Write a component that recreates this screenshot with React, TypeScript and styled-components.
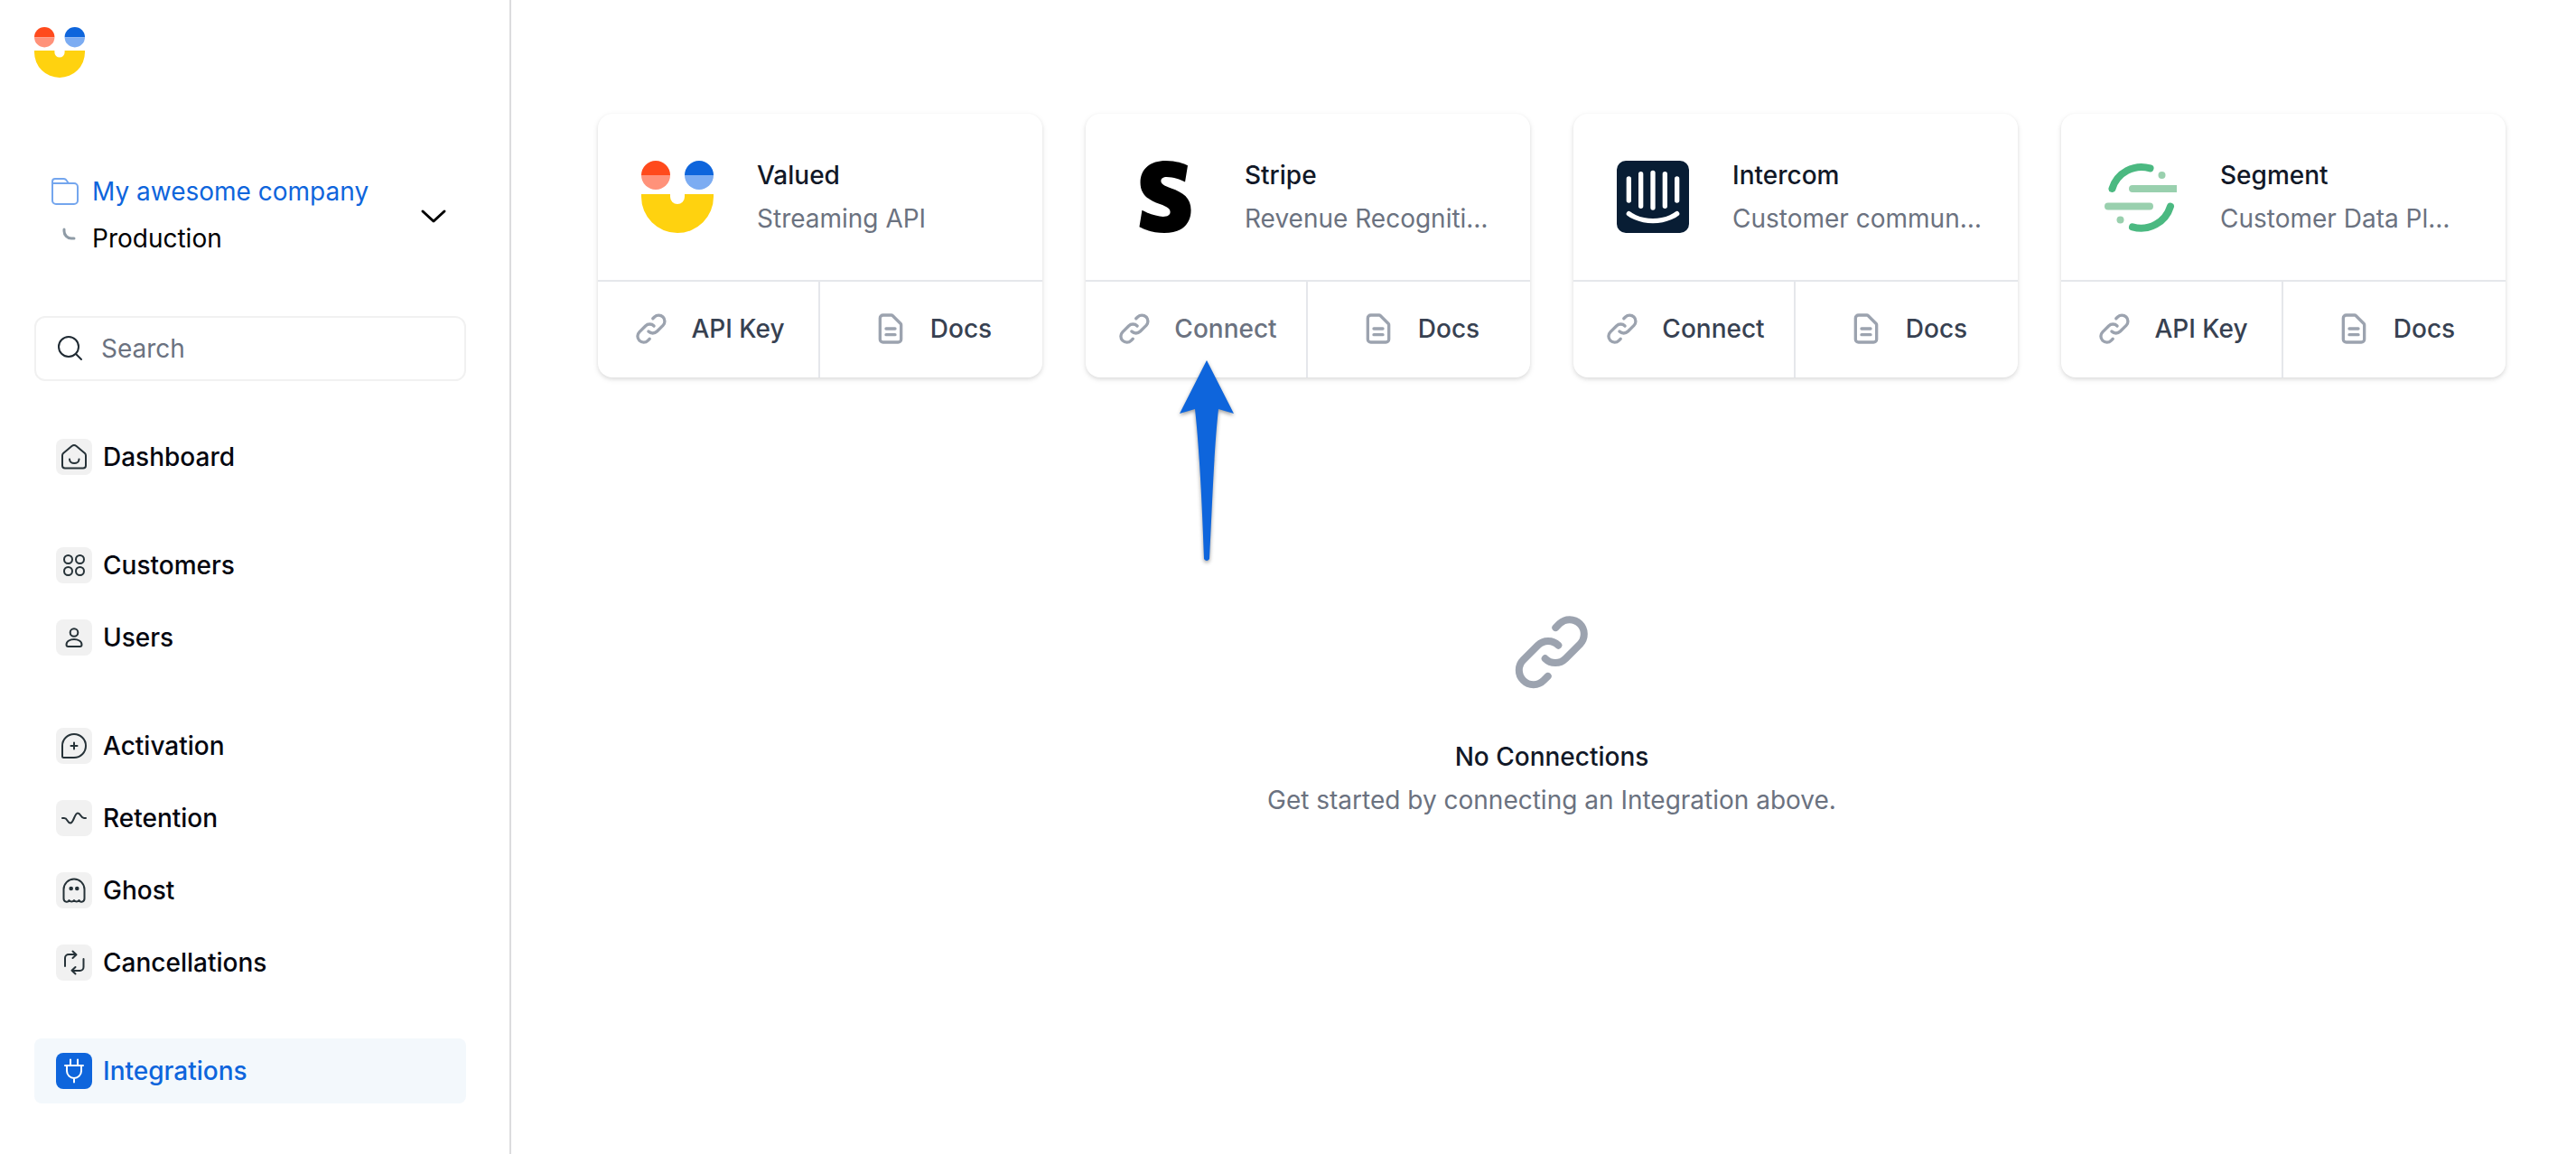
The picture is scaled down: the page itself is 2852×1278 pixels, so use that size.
import React from "react";
import styled, { createGlobalStyle } from "styled-components";

const sans = `Inter, "Noto Sans", sans-serif`;

const GlobalStyle = createGlobalStyle`
  *, *::before, *::after { box-sizing: border-box; }
  body { margin: 0; background: #fff; font-family: ${sans}; font-size: 28px; line-height: 40px; color: #111827; }
  h2, h3, p { margin: 0; font-weight: inherit; font-size: inherit; }
  button, input { font: inherit; }
  svg { display: block; flex: none; }
`;

const Page = styled.div`
  display: flex;
  min-height: 100vh;
`;

const Sidebar = styled.aside`
  flex: none;
  width: 566px;
  padding: 30px 48px 56px 38px;
  border-right: 2px solid #dcdcde;
`;

const Project = styled.button`
  display: flex;
  align-items: center;
  justify-content: space-between;
  width: 100%;
  margin: 106px 0 66px;
  padding: 0 20px 0 16px;
  border: 0;
  background: none;
  text-align: left;
  cursor: pointer;
`;

const ProjectLines = styled.span`
  display: grid;
  grid-template-columns: 36px 1fr;
  align-items: center;
  column-gap: 12px;
  row-gap: 12px;
`;

const Company = styled.span`
  color: #0e65dc;
`;

const Environment = styled.span`
  color: #000;
`;

const SearchBox = styled.label`
  display: flex;
  align-items: center;
  gap: 18px;
  height: 72px;
  padding: 0 22px;
  border: 2px solid #f1f1f1;
  border-radius: 12px;
  color: #1f2a33;
`;

const SearchInput = styled.input`
  flex: 1;
  min-width: 0;
  padding: 0;
  border: 0;
  outline: 0;
  background: none;
  color: #111827;
  &::placeholder { color: #6b7280; opacity: 1; }
`;

const Nav = styled.nav`
  display: flex;
  flex-direction: column;
  gap: 48px;
  margin-top: 48px;
`;

const NavGroup = styled.div`
  display: flex;
  flex-direction: column;
  gap: 8px;
`;

const NavLink = styled.a<{ $active?: boolean }>`
  display: flex;
  align-items: center;
  gap: 12px;
  height: 72px;
  padding: 0 24px;
  border-radius: 8px;
  font-weight: 500;
  text-decoration: none;
  color: ${(p) => (p.$active ? "#0e65dc" : "#05060f")};
  background: ${(p) => (p.$active ? "#f3f8fc" : "transparent")};
`;

const NavIcon = styled.span<{ $active?: boolean }>`
  display: grid;
  place-items: center;
  width: 40px;
  height: 40px;
  border-radius: 8px;
  color: ${(p) => (p.$active ? "#fff" : "#263238")};
  background: ${(p) => (p.$active ? "#0e65dc" : "#f1f1f1")};
`;

const Main = styled.main`
  flex: 1;
  min-width: 0;
  padding: 126px 78px 96px 96px;
`;

const Cards = styled.section`
  display: grid;
  grid-template-columns: repeat(4, minmax(0, 1fr));
  gap: 48px;
`;

const Card = styled.article`
  border-radius: 16px;
  background: #fff;
  box-shadow: 0 2px 6px rgba(0, 0, 0, 0.1), 0 2px 4px rgba(0, 0, 0, 0.06);
`;

const CardHead = styled.div`
  display: flex;
  align-items: center;
  gap: 48px;
  padding: 48px 24px 48px 48px;
`;

const CardText = styled.div`
  display: grid;
  gap: 8px;
  min-width: 0;
`;

const CardTitle = styled.h2`
  && { font-weight: 500; }
  color: #111827;
`;

const CardNote = styled.p`
  overflow: hidden;
  white-space: nowrap;
  text-overflow: ellipsis;
  color: #6b7280;
`;

const Actions = styled.div`
  display: grid;
  grid-template-columns: 1fr 1fr;
  border-top: 2px solid #e5e7eb;
`;

const ActionCell = styled.div`
  position: relative;
  &:first-child { border-right: 2px solid #e5e7eb; }
`;

const Action = styled.button<{ $muted?: boolean }>`
  display: flex;
  align-items: center;
  justify-content: center;
  gap: 24px;
  width: 100%;
  padding: 32px 0 34px 2px;
  border: 0;
  background: none;
  font-weight: 500;
  color: ${(p) => (p.$muted ? "#6b7280" : "#374151")};
  cursor: pointer;
`;

const Pointer = styled.svg`
  position: absolute;
  left: 100px;
  top: 84px;
  z-index: 1;
  filter: drop-shadow(0 2px 2px rgba(0, 0, 0, 0.4));
`;

const Empty = styled.section`
  display: flex;
  flex-direction: column;
  align-items: center;
  padding-top: 256px;
  text-align: center;
`;

const EmptyTitle = styled.h3`
  && { font-weight: 500; margin: 48px 0 8px; }
`;

const EmptyNote = styled.p`
  color: #6b7280;
`;

const line = {
  fill: "none",
  stroke: "currentColor",
  strokeLinecap: "round",
  strokeLinejoin: "round",
} as const;

const ValuedLogo = ({ size }: { size: number }) => (
  <svg width={size} height={size} viewBox="0 0 80 80" aria-hidden="true">
    <path d="M0 16a16 16 0 0 1 32 0z" fill="#ff4a1c" />
    <path d="M0 16a16 16 0 0 0 32 0z" fill="#ff927a" />
    <path d="M48 16a16 16 0 0 1 32 0z" fill="#0e65dc" />
    <path d="M48 16a16 16 0 0 0 32 0z" fill="#7cacf2" />
    <path d="M0 37h32v3a8 8 0 0 0 16 0v-3h32v3a40 40 0 0 1-80 0z" fill="#ffd20f" />
  </svg>
);

const StripeLogo = () => (
  <svg width="80" height="80" viewBox="0 0 24 24" aria-hidden="true">
    <path d="M13.976 9.15c-2.172-.806-3.356-1.426-3.356-2.409 0-.831.683-1.305 1.901-1.305 2.227 0 4.515.858 6.09 1.631l.89-5.494C18.252.975 15.697 0 12.165 0 9.667 0 7.589.654 6.104 1.872 4.56 3.147 3.757 4.992 3.757 7.218c0 4.039 2.467 5.76 6.476 7.219 2.585.92 3.445 1.574 3.445 2.583 0 .98-.84 1.545-2.354 1.545-1.875 0-4.965-.921-6.99-2.109l-.9 5.555C5.175 22.99 8.385 24 11.714 24c2.641 0 4.843-.624 6.328-1.813 1.664-1.305 2.525-3.236 2.525-5.732 0-4.128-2.524-5.851-6.591-7.305z" />
  </svg>
);

const IntercomLogo = () => (
  <svg width="80" height="80" viewBox="0 0 24 24" aria-hidden="true">
    <rect width="24" height="24" rx="3" fill="#081d34" />
    <path
      d="M4 6v7.2M8 4.4v10.7M12 4v11.6M16 4.4v10.7M20 6v7.2M4 17.6S6.900 20 12 20s8-2.400 8-2.400"
      fill="none"
      stroke="#fff"
      strokeWidth="1.6"
      strokeLinecap="round"
    />
  </svg>
);

const SegmentLogo = () => (
  <svg width="80" height="80" viewBox="0 0 80 80" fill="none" strokeWidth="8" strokeLinecap="round" aria-hidden="true">
    <path d="M8.500 31A34 34 0 0 1 50.500 8.400M73 50.500A34 34 0 0 1 31 73.400" stroke="#4bb981" />
    <path d="M31 31h54M4 50.500h46" stroke="#99d0ae" />
    <circle cx="63.500" cy="16" r="4" fill="#99d0ae" stroke="none" />
    <circle cx="17.500" cy="65.500" r="4" fill="#99d0ae" stroke="none" />
  </svg>
);

const LinkIcon = ({ size }: { size: number }) => (
  <svg width={size} height={size} viewBox="0 0 24 24" {...line} stroke="#9ca3af" strokeWidth="2" aria-hidden="true">
    <path d="M13.828 10.172a4 4 0 0 0-5.656 0l-4 4a4 4 0 1 0 5.656 5.656l1.102-1.101m-.758-4.899a4 4 0 0 0 5.656 0l4-4a4 4 0 0 0-5.656-5.656l-1.100 1.100" />
  </svg>
);

const DocIcon = () => (
  <svg width="40" height="40" viewBox="0 0 24 24" {...line} stroke="#9ca3af" strokeWidth="2" aria-hidden="true">
    <path d="M9 12h6m-6 4h6m2 5H7a2 2 0 0 1-2-2V5a2 2 0 0 1 2-2h5.586a1 1 0 0 1 .707.293l5.414 5.414a1 1 0 0 1 .293.707V19a2 2 0 0 1-2 2z" />
  </svg>
);

const FolderIcon = () => (
  <svg width="36" height="36" viewBox="0 0 36 36" {...line} stroke="#74a6ee" strokeWidth="2" aria-hidden="true">
    <path d="M4 9v19a4 4 0 0 0 4 4h20a4 4 0 0 0 4-4V13a4 4 0 0 0-4-4zV7a3 3 0 0 1 3-3h9a4 4 0 0 1 3 1l3 4" />
  </svg>
);

const BranchIcon = () => (
  <svg width="36" height="36" viewBox="0 0 36 36" {...line} stroke="#8f9ba6" strokeWidth="3" aria-hidden="true">
    <path d="M17 8v2a8 8 0 0 0 8 8h3" />
  </svg>
);

const ChevronIcon = () => (
  <svg width="32" height="32" viewBox="0 0 32 32" {...line} stroke="#000" strokeWidth="3" aria-hidden="true">
    <path d="M4 12l12 11 12-11" />
  </svg>
);

const SearchIcon = () => (
  <svg width="32" height="32" viewBox="0 0 32 32" {...line} strokeWidth="2" aria-hidden="true">
    <circle cx="14" cy="14" r="11" />
    <path d="M22 22l6 6" />
  </svg>
);

const navIcons: Record<string, React.ReactNode> = {
  home: <path d="M7 18.500q0-1.500 1-2.500l9.500-8q2.500-2 5 0l9.500 8q1 1 1 2.500V29.500a3 3 0 0 1-3 3H10a3 3 0 0 1-3-3zM15 22.500c0 6 10.500 6 10.500 0" />,
  grid: (
    <>
      <circle cx="13.500" cy="13.500" r="4.500" />
      <circle cx="26.500" cy="13.500" r="4.500" />
      <circle cx="13.500" cy="26.500" r="4.500" />
      <circle cx="26.500" cy="26.500" r="4.500" />
    </>
  ),
  user: (
    <>
      <circle cx="20" cy="14.500" r="4.300" />
      <path d="M11.500 28C11.500 20 28.500 20 28.500 28q0 2-2 2h-13q-2 0-2-2z" />
    </>
  ),
  activation: <path d="M7 20a13 13 0 1 1 13 13H8.500Q7 33 7 31.500zM20 16.500v7M16.500 20h7" />,
  wave: <path d="M7 20h2c4 0 3.500 5.500 7 5.500S20.500 14.500 24 14.500 27 20 31 20h2" />,
  ghost: (
    <>
      <path d="M8.500 19a11.500 11.500 0 0 1 23 0v10c0 4-4.500 5-6 2-1.500 2-4 2-5.500 0-1.500 2-4 2-5.500 0-1.500 3-6 2-6-2z" />
      <circle cx="16.700" cy="18" r="1.300" fill="currentColor" />
      <circle cx="23.300" cy="18" r="1.300" fill="currentColor" />
    </>
  ),
  cycle: <path d="M10 24V15a4 4 0 0 1 4-4h8M18.500 7.500L22.500 11.300l-4 3.700M30.500 16v9a4 4 0 0 1-4 4h-8M21.500 25L17.500 28.800l4 3.700" />,
  plug: <path d="M16 7.500V14M24 7.500V14M10 14h20M12 14v6a8 8 0 0 0 16 0v-6M20 28v4.500" />,
};

const navGroups = [
  [{ label: "Dashboard", icon: "home" }],
  [
    { label: "Customers", icon: "grid" },
    { label: "Users", icon: "user" },
  ],
  [
    { label: "Activation", icon: "activation" },
    { label: "Retention", icon: "wave" },
    { label: "Ghost", icon: "ghost" },
    { label: "Cancellations", icon: "cycle" },
  ],
  [{ label: "Integrations", icon: "plug", active: true }],
] as { label: string; icon: string; active?: boolean }[][];

const integrations = [
  { name: "Valued", note: "Streaming API", action: "API Key", logo: <ValuedLogo size={80} /> },
  { name: "Stripe", note: "Revenue Recogniti…", action: "Connect", logo: <StripeLogo />, highlighted: true },
  { name: "Intercom", note: "Customer commun…", action: "Connect", logo: <IntercomLogo /> },
  { name: "Segment", note: "Customer Data Pl…", action: "API Key", logo: <SegmentLogo /> },
];

export default function App() {
  return (
    <>
      <GlobalStyle />
      <Page>
        <Sidebar>
          <ValuedLogo size={56} />
          <Project>
            <ProjectLines>
              <FolderIcon />
              <Company>My awesome company</Company>
              <BranchIcon />
              <Environment>Production</Environment>
            </ProjectLines>
            <ChevronIcon />
          </Project>
          <SearchBox>
            <SearchIcon />
            <SearchInput type="search" placeholder="Search" aria-label="Search" />
          </SearchBox>
          <Nav>
            {navGroups.map((group) => (
              <NavGroup key={group[0].label}>
                {group.map((item) => (
                  <NavLink key={item.label} href="#" $active={item.active}>
                    <NavIcon $active={item.active}>
                      <svg width="40" height="40" viewBox="0 0 40 40" {...line} strokeWidth="2" aria-hidden="true">
                        {navIcons[item.icon]}
                      </svg>
                    </NavIcon>
                    {item.label}
                  </NavLink>
                ))}
              </NavGroup>
            ))}
          </Nav>
        </Sidebar>
        <Main>
          <Cards>
            {integrations.map((it) => (
              <Card key={it.name}>
                <CardHead>
                  {it.logo}
                  <CardText>
                    <CardTitle>{it.name}</CardTitle>
                    <CardNote>{it.note}</CardNote>
                  </CardText>
                </CardHead>
                <Actions>
                  <ActionCell>
                    <Action $muted={it.highlighted}>
                      <LinkIcon size={40} />
                      {it.action}
                    </Action>
                    {it.highlighted && (
                      <Pointer width="68" height="232" viewBox="0 0 68 232" aria-hidden="true">
                        <path
                          d="M34 3L64 62l-17-5c-5 45-7 110-10 166q-3 4-6 0C29 167 26 102 21 57L4 62z"
                          fill="#0e65dc"
                        />
                      </Pointer>
                    )}
                  </ActionCell>
                  <ActionCell>
                    <Action>
                      <DocIcon />
                      Docs
                    </Action>
                  </ActionCell>
                </Actions>
              </Card>
            ))}
          </Cards>
          <Empty>
            <LinkIcon size={96} />
            <EmptyTitle>No Connections</EmptyTitle>
            <EmptyNote>Get started by connecting an Integration above.</EmptyNote>
          </Empty>
        </Main>
      </Page>
    </>
  );
}
